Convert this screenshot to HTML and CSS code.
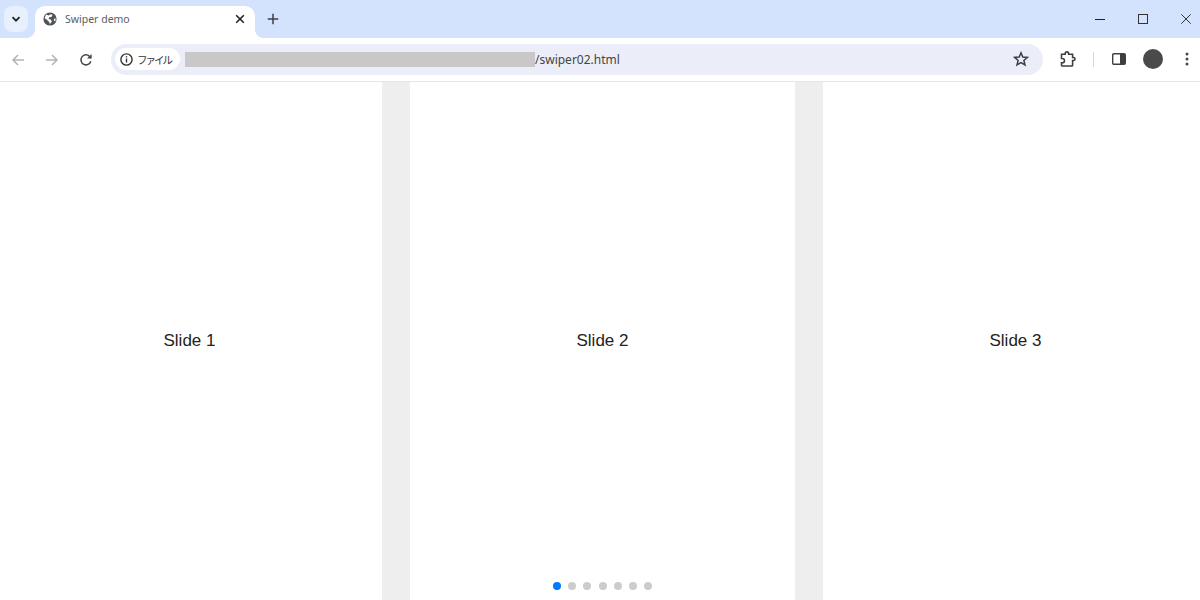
FILE: index.html
```html
<!DOCTYPE html>
<html lang="ja">
<head>
  <meta charset="UTF-8">
  <title>Swiper demo</title>
  <link rel="stylesheet" href="styles.css">
</head>
<body>
  <header class="browser">
    <div class="tabstrip">
      <button class="tab-search">
        <svg width="12" height="12" viewBox="0 0 12 12"><path d="M2.5 4.2 6 7.7l3.5-3.5" fill="none" stroke="#222" stroke-width="1.8"/></svg>
      </button>
      <div class="tab">
        <svg class="favicon" width="14" height="14" viewBox="0 0 14 14"><circle cx="7" cy="7" r="6.6" fill="#50555a"/><path d="M3 2.6 5.6 3.4 7.6 2.2 9.6 3 8.4 5 6.2 5.2 5.6 7 7.8 7.6 8.8 9.4 7 12 5.8 9.6 3.6 7.6 1.6 6.2Z" fill="#fff"/><path d="M11 6.8 12.8 6.6 12.2 9.6 10.8 8.4Z" fill="#fff"/></svg>
        <span class="tab-title">Swiper demo</span>
        <svg class="tab-close" width="10" height="10" viewBox="0 0 10 10"><path d="M1.200 1.200 8.800 8.800M8.800 1.200 1.200 8.800" stroke="#222" stroke-width="1.600"/></svg>
      </div>
      <svg class="new-tab" width="12" height="12" viewBox="0 0 12 12"><path d="M6 .8v10.400M.8 6h10.400" stroke="#3c4043" stroke-width="1.500"/></svg>
      <div class="window-controls">
        <svg width="10" height="10" viewBox="0 0 10 10"><path d="M0 5.500h10" stroke="#222" stroke-width="1"/></svg>
        <svg width="10" height="10" viewBox="0 0 10 10"><rect x=".5" y=".5" width="9" height="9" fill="none" stroke="#333" stroke-width="1"/></svg>
        <svg width="10" height="10" viewBox="0 0 10 10"><path d="M.3.3l9.400 9.400M9.700.3.3 9.700" stroke="#333" stroke-width="1"/></svg>
      </div>
    </div>
    <div class="toolbar">
      <svg class="nav" width="14" height="14" viewBox="0 0 14 14"><path d="M13 7H2M7 2 2 7l5 5" fill="none" stroke="#b0b3b7" stroke-width="1.500"/></svg>
      <svg class="nav" width="14" height="14" viewBox="0 0 14 14"><path d="M1 7h11M7 2l5 5-5 5" fill="none" stroke="#b0b3b7" stroke-width="1.500"/></svg>
      <svg class="nav" width="14" height="14" viewBox="0 0 14 14"><path d="M11.800 8.200A5 5 0 1 1 10.600 3.400L12 5" fill="none" stroke="#45484c" stroke-width="1.500"/><path d="M12.600 1v4.600H8z" fill="#45484c"/></svg>
      <div class="omnibox">
        <div class="chip">
          <svg width="13" height="13" viewBox="0 0 13 13"><circle cx="6.500" cy="6.500" r="5.600" fill="none" stroke="#333" stroke-width="1.400"/><path d="M6.500 5.600v4M6.500 3.200v1.400" stroke="#333" stroke-width="1.400"/></svg>
          <span>ファイル</span>
        </div>
        <div class="masked"></div>
        <span class="url">/swiper02.html</span>
        <svg class="star" width="16" height="16" viewBox="0 0 16 16"><path d="M8 1.800 9.800 6l4.600.4-3.500 3 1.100 4.500L8 11.500l-4 2.400 1.100-4.500-3.500-3L6.200 6Z" fill="none" stroke="#3c4043" stroke-width="1.500"/></svg>
      </div>
      <svg class="ext" width="17" height="16" viewBox="0 0 17 16"><path d="M1.500 3.200H5.200V2.600a1.700 1.700 0 0 1 3.400 0v.6h4v3.300h.9a1.500 1.500 0 0 1 0 3h-.9v4.700a.8.8 0 0 1-.8.8H2.300a.8.8 0 0 1-.8-.8v-2.400h.8a2.100 2.100 0 0 0 0-4.300h-.8z" fill="none" stroke="#3c4043" stroke-width="1.600"/></svg>
      <div class="divider"></div>
      <svg class="panel" width="14" height="12" viewBox="0 0 14 12"><rect x=".7" y=".7" width="12.600" height="10.600" rx="1.200" fill="none" stroke="#3c4043" stroke-width="1.400"/><rect x="8" y="1" width="5" height="10" fill="#3c4043"/></svg>
      <div class="avatar"></div>
      <svg class="menu" width="4" height="14" viewBox="0 0 4 14"><circle cx="2" cy="2" r="1.500" fill="#45484c"/><circle cx="2" cy="7" r="1.500" fill="#45484c"/><circle cx="2" cy="12" r="1.500" fill="#45484c"/></svg>
    </div>
  </header>
  <main class="swiper">
    <div class="swiper-wrapper">
      <div class="swiper-slide">Slide 1</div>
      <div class="swiper-slide">Slide 2</div>
      <div class="swiper-slide">Slide 3</div>
    </div>
    <div class="pagination">
      <span class="dot active"></span>
      <span class="dot"></span>
      <span class="dot"></span>
      <span class="dot"></span>
      <span class="dot"></span>
      <span class="dot"></span>
      <span class="dot"></span>
    </div>
  </main>
</body>
</html>
```

FILE: styles.css
```css
html,
body {
  height: 100%;
}

body {
  margin: 0;
  overflow: hidden;
  display: flex;
  flex-direction: column;
  background: #fff;
  font-family: "Liberation Sans", Arial, sans-serif;
  color: #000;
}

svg {
  display: block;
  flex: none;
}

/* browser chrome */
.browser {
  flex: none;
  font-family: "Noto Sans", "Noto Sans CJK JP", sans-serif;
}

.tabstrip {
  height: 38px;
  display: flex;
  align-items: flex-start;
  background: #d3e3fd;
  box-sizing: border-box;
  padding: 6px 0 0 4px;
}

.tab-search {
  width: 24px;
  height: 26px;
  padding: 0;
  border: none;
  border-radius: 8px;
  background: #e8f0fe;
  display: flex;
  align-items: center;
  justify-content: center;
}

.tab {
  position: relative;
  width: 220px;
  height: 32px;
  margin-left: 7px;
  box-sizing: border-box;
  padding: 0 10px 6px 8px;
  display: flex;
  align-items: center;
  background: #fff;
  border-radius: 10px 10px 0 0;
}

.tab:before,
.tab:after {
  content: "";
  position: absolute;
  bottom: 0;
  width: 8px;
  height: 8px;
}

.tab:before {
  left: -8px;
  background: radial-gradient(circle at 0 0, #d3e3fd 7.5px, #fff 8px);
}

.tab:after {
  right: -8px;
  background: radial-gradient(circle at 100% 0, #d3e3fd 7.5px, #fff 8px);
}

.tab-title {
  margin-left: 8px;
  flex: 1;
  font-size: 10.5px;
  color: #5a5e63;
  white-space: nowrap;
}

.new-tab {
  margin: 7px 0 0 12px;
}

.window-controls {
  margin: 8px 0 0 auto;
  display: flex;
  gap: 33px;
  padding-right: 9px;
}

.toolbar {
  height: 44px;
  display: flex;
  align-items: center;
  box-sizing: border-box;
  padding-left: 11px;
  border-bottom: 1px solid #e6e6e6;
  background: #fff;
}

.nav {
  margin-right: 20px;
}

.nav:nth-child(3) {
  margin-right: 18px;
}

.omnibox {
  width: 932px;
  height: 31px;
  margin-top: -1px;
  box-sizing: border-box;
  padding: 0 14px 0 4px;
  display: flex;
  align-items: center;
  background: #ebeef8;
  border-radius: 16px;
}

.chip {
  width: 65px;
  height: 22px;
  box-sizing: border-box;
  padding-left: 5px;
  display: flex;
  align-items: center;
  gap: 4px;
  background: #fff;
  border-radius: 11px;
  font-size: 10.5px;
  letter-spacing: -2px;
  color: #333;
  white-space: nowrap;
}

.masked {
  width: 350px;
  height: 15px;
  margin-left: 5px;
  background: #c9c7c7;
}

.url {
  font-size: 12px;
  color: #444;
  white-space: nowrap;
}

.star {
  margin-left: auto;
}

.ext {
  margin: -1px 0 0 17px;
}

.divider {
  width: 1px;
  height: 15px;
  margin: -1px 0 0 16px;
  background: #c6daf8;
}

.panel {
  margin: -1px 0 0 18px;
}

.avatar {
  width: 20px;
  height: 20px;
  margin: -1px 0 0 17px;
  border-radius: 50%;
  background: #4a4a4a;
}

.menu {
  margin: -1px 0 0 22px;
}

/* slider */
.swiper {
  position: relative;
  flex: 1;
  overflow: hidden;
  background: #eee;
}

.swiper-wrapper {
  height: 100%;
  margin-left: -3px;
  display: flex;
  gap: 28px;
}

.swiper-slide {
  flex: 0 0 385px;
  display: flex;
  align-items: center;
  justify-content: center;
  background: #fff;
  font-size: 17px;
  color: #222;
}

.pagination {
  position: absolute;
  left: 553px;
  bottom: 10px;
  display: flex;
  gap: 7.2px;
}

.dot {
  width: 8px;
  height: 8px;
  border-radius: 50%;
  background: #ccc;
}

.dot.active {
  background: #007aff;
}
```
